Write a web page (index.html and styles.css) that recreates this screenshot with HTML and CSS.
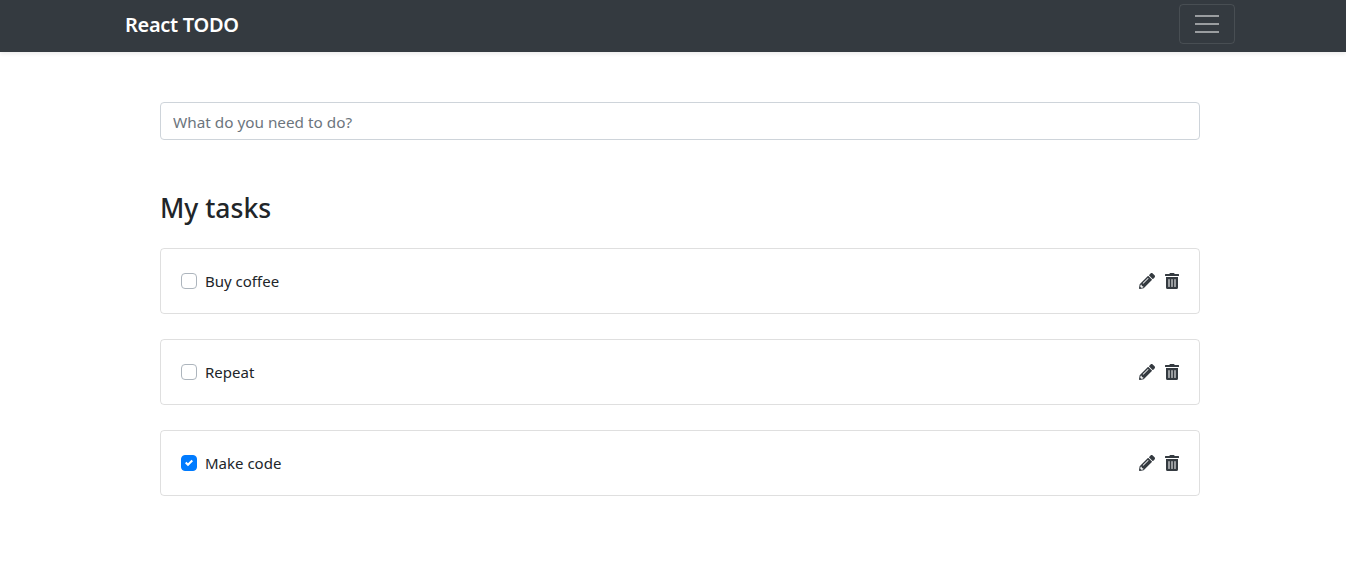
FILE: index.html
```html
<!DOCTYPE html>
<html lang="en">
<head>
  <meta charset="UTF-8">
  <meta name="viewport" content="width=device-width, initial-scale=1.0">
  <title>React TODO</title>
  <link rel="stylesheet" href="styles.css">
</head>
<body>
  <nav class="navbar">
    <a class="brand" href="#">React TODO</a>
    <button class="toggler" aria-label="Toggle navigation">
      <svg width="30" height="30" viewBox="0 0 30 30">
        <path d="M3 7h24M3 15h24M3 23h24" stroke="rgba(255,255,255,0.5)" stroke-width="2" stroke-miterlimit="10" fill="none"/>
      </svg>
    </button>
  </nav>

  <main class="container">
    <input class="new-task" type="text" placeholder="What do you need to do?">

    <h2 class="title">My tasks</h2>

    <div class="task">
      <label class="task-label">
        <input class="check" type="checkbox">
        <span class="box"></span>
        Buy coffee
      </label>
      <div class="actions">
        <svg class="icon" viewBox="0 0 512 512"><path d="M497.9 142.1l-46.1 46.1c-4.7 4.7-12.3 4.7-17 0l-111-111c-4.7-4.7-4.7-12.3 0-17l46.1-46.1c18.7-18.7 49.1-18.7 67.9 0l60.1 60.1c18.8 18.7 18.8 49.1 0 67.9zM284.2 99.8L21.6 362.4.4 483.9c-2.9 16.4 11.4 30.6 27.8 27.8l121.5-21.3 262.6-262.6c4.7-4.7 4.7-12.3 0-17l-111-111c-4.8-4.7-12.4-4.7-17.1 0zM124.1 339.9c-5.5-5.5-5.5-14.3 0-19.8l154-154c5.5-5.5 14.3-5.5 19.8 0s5.5 14.3 0 19.8l-154 154c-5.5 5.5-14.3 5.5-19.8 0zM88 424h48v36.3l-64.5 11.3-31.1-31.1L51.7 376H88v48z"/></svg>
        <svg class="icon trash" viewBox="0 0 448 512"><path d="M32 464a48 48 0 0 0 48 48h288a48 48 0 0 0 48-48V128H32zm272-256a16 16 0 0 1 32 0v224a16 16 0 0 1-32 0zm-96 0a16 16 0 0 1 32 0v224a16 16 0 0 1-32 0zm-96 0a16 16 0 0 1 32 0v224a16 16 0 0 1-32 0zM432 32H312l-9.4-18.7A24 24 0 0 0 281.1 0H166.8a23.72 23.72 0 0 0-21.4 13.3L136 32H16A16 16 0 0 0 0 48v32a16 16 0 0 0 16 16h416a16 16 0 0 0 16-16V48a16 16 0 0 0-16-16z"/></svg>
      </div>
    </div>

    <div class="task">
      <label class="task-label">
        <input class="check" type="checkbox">
        <span class="box"></span>
        Repeat
      </label>
      <div class="actions">
        <svg class="icon" viewBox="0 0 512 512"><path d="M497.9 142.1l-46.1 46.1c-4.7 4.7-12.3 4.7-17 0l-111-111c-4.7-4.7-4.7-12.3 0-17l46.1-46.1c18.7-18.7 49.1-18.7 67.9 0l60.1 60.1c18.8 18.7 18.8 49.1 0 67.9zM284.2 99.8L21.6 362.4.4 483.9c-2.9 16.4 11.4 30.6 27.8 27.8l121.5-21.3 262.6-262.6c4.7-4.7 4.7-12.3 0-17l-111-111c-4.8-4.7-12.4-4.7-17.1 0zM124.1 339.9c-5.5-5.5-5.5-14.3 0-19.8l154-154c5.5-5.5 14.3-5.5 19.8 0s5.5 14.3 0 19.8l-154 154c-5.5 5.5-14.3 5.5-19.8 0zM88 424h48v36.3l-64.5 11.3-31.1-31.1L51.7 376H88v48z"/></svg>
        <svg class="icon trash" viewBox="0 0 448 512"><path d="M32 464a48 48 0 0 0 48 48h288a48 48 0 0 0 48-48V128H32zm272-256a16 16 0 0 1 32 0v224a16 16 0 0 1-32 0zm-96 0a16 16 0 0 1 32 0v224a16 16 0 0 1-32 0zm-96 0a16 16 0 0 1 32 0v224a16 16 0 0 1-32 0zM432 32H312l-9.4-18.7A24 24 0 0 0 281.1 0H166.8a23.72 23.72 0 0 0-21.4 13.3L136 32H16A16 16 0 0 0 0 48v32a16 16 0 0 0 16 16h416a16 16 0 0 0 16-16V48a16 16 0 0 0-16-16z"/></svg>
      </div>
    </div>

    <div class="task">
      <label class="task-label">
        <input class="check" type="checkbox" checked>
        <span class="box"></span>
        Make code
      </label>
      <div class="actions">
        <svg class="icon" viewBox="0 0 512 512"><path d="M497.9 142.1l-46.1 46.1c-4.7 4.7-12.3 4.7-17 0l-111-111c-4.7-4.7-4.7-12.3 0-17l46.1-46.1c18.7-18.7 49.1-18.7 67.9 0l60.1 60.1c18.8 18.7 18.8 49.1 0 67.9zM284.2 99.8L21.6 362.4.4 483.9c-2.9 16.4 11.4 30.6 27.8 27.8l121.5-21.3 262.6-262.6c4.7-4.7 4.7-12.3 0-17l-111-111c-4.8-4.7-12.4-4.7-17.1 0zM124.1 339.9c-5.5-5.5-5.5-14.3 0-19.8l154-154c5.5-5.5 14.3-5.5 19.8 0s5.5 14.3 0 19.8l-154 154c-5.5 5.5-14.3 5.5-19.8 0zM88 424h48v36.3l-64.5 11.3-31.1-31.1L51.7 376H88v48z"/></svg>
        <svg class="icon trash" viewBox="0 0 448 512"><path d="M32 464a48 48 0 0 0 48 48h288a48 48 0 0 0 48-48V128H32zm272-256a16 16 0 0 1 32 0v224a16 16 0 0 1-32 0zm-96 0a16 16 0 0 1 32 0v224a16 16 0 0 1-32 0zm-96 0a16 16 0 0 1 32 0v224a16 16 0 0 1-32 0zM432 32H312l-9.4-18.7A24 24 0 0 0 281.1 0H166.8a23.72 23.72 0 0 0-21.4 13.3L136 32H16A16 16 0 0 0 0 48v32a16 16 0 0 0 16 16h416a16 16 0 0 0 16-16V48a16 16 0 0 0-16-16z"/></svg>
      </div>
    </div>
  </main>
</body>
</html>
```

FILE: styles.css
```css
body {
  font-family: "Noto Sans", "Open Sans", Arial, sans-serif;
  margin: 0;
  padding: 0;
  background-color: #ffffff;
  color: #212529;
}
.navbar {
  display: flex;
  align-items: center;
  justify-content: space-between;
  height: 52px;
  box-sizing: border-box;
  padding: 0 111px 4px 125px;
  background-color: #343a40;
  box-shadow: 0 2px 4px rgba(0, 0, 0, 0.08);
}
.brand {
  color: white;
  font-size: 20px;
  font-weight: 600;
  text-decoration: none;
  letter-spacing: -0.3px;
}
.toggler {
  display: flex;
  align-items: center;
  justify-content: center;
  width: 56px;
  height: 40px;
  padding: 0;
  background: none;
  border: 1px solid rgba(255, 255, 255, 0.1);
  border-radius: 4px;
}
.container {
  margin: 0 146px 0 160px;
  padding-top: 50px;
}
.new-task {
  display: block;
  width: 100%;
  height: 38px;
  box-sizing: border-box;
  padding: 6px 12px 4px;
  font-family: inherit;
  font-size: 15.3px;
  color: #495057;
  border: 1px solid #ced4da;
  border-radius: 4px;
}
.new-task::placeholder {
  color: #6c757d;
  opacity: 1;
}
.title {
  margin: 48px 0 20px;
  font-size: 26.5px;
  font-weight: 500;
  line-height: 40px;
}
.task {
  display: flex;
  align-items: center;
  justify-content: space-between;
  height: 66px;
  box-sizing: border-box;
  margin-bottom: 25px;
  padding: 0 20px;
  border: 1px solid rgba(0, 0, 0, 0.125);
  border-radius: 4px;
}
.task-label {
  display: flex;
  align-items: center;
  font-size: 15px;
}
.check {
  display: none;
}
.box {
  width: 16px;
  height: 16px;
  box-sizing: border-box;
  margin-right: 8px;
  background-color: white;
  border: 1px solid #adb5bd;
  border-radius: 4px;
}
.check:checked + .box {
  border-color: #007bff;
  background-color: #007bff;
  background-image: url("data:image/svg+xml,%3csvg xmlns='http://www.w3.org/2000/svg' viewBox='0 0 8 8'%3e%3cpath fill='%23fff' d='M6.564.75l-3.59 3.612-1.538-1.55L0 4.26l2.974 2.99L8 2.193z'/%3e%3c/svg%3e");
  background-size: 60% 60%;
  background-position: center;
  background-repeat: no-repeat;
}
.actions {
  display: flex;
  align-items: center;
  gap: 10px;
}
.icon {
  display: block;
  width: 16px;
  height: 16px;
  fill: #343a40;
}
.trash {
  width: 14px;
}
```
